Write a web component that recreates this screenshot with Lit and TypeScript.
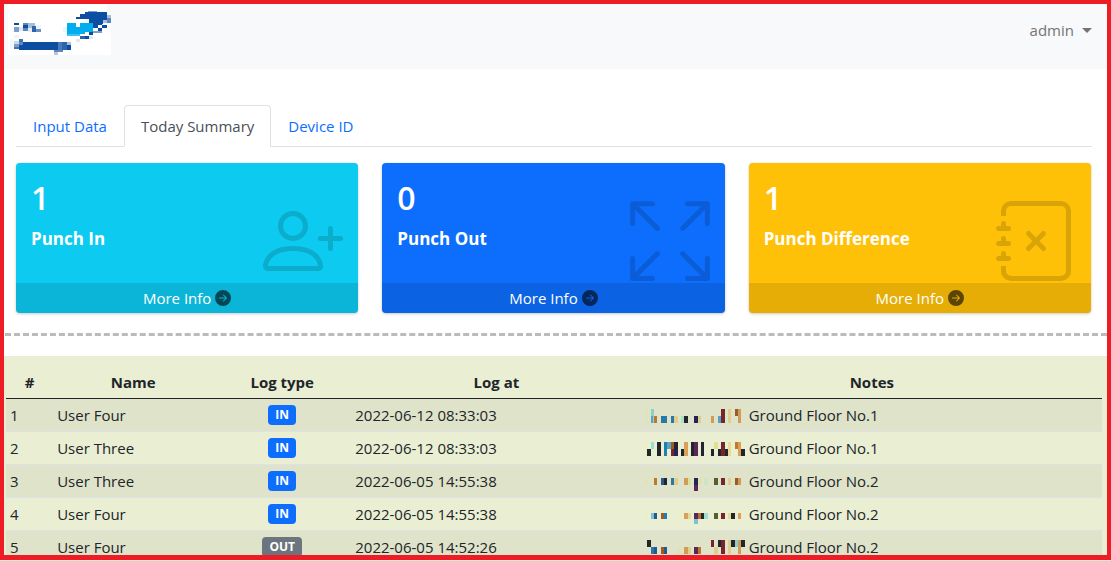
import { LitElement, html, css, svg } from "lit";
import { customElement, state } from "lit/decorators.js";

type Block = [number, number, number, number, string];

interface Card {
  count: number;
  title: string;
  tone: string;
  icon: string[];
}

interface LogEntry {
  name: string;
  type: "IN" | "OUT";
  at: string;
  place: string;
  mosaic: Block[];
}

const CARDS: Card[] = [
  {
    count: 1,
    title: "Punch In",
    tone: "info",
    icon: [
      "M6 8a3 3 0 1 0 0-6 3 3 0 0 0 0 6zm2-3a2 2 0 1 1-4 0 2 2 0 0 1 4 0zm4 8c0 1-1 1-1 1H1s-1 0-1-1 1-4 6-4 6 3 6 4zm-1-.004c-.001-.246-.154-.986-.832-1.664C9.516 10.68 8.289 10 6 10c-2.29 0-3.516.68-4.168 1.332-.678.678-.83 1.418-.832 1.664h10z",
      "M13.5 5a.5.5 0 0 1 .5.5V7h1.5a.5.5 0 0 1 0 1H14v1.5a.5.5 0 0 1-1 0V8h-1.5a.5.5 0 0 1 0-1H13V5.5a.5.5 0 0 1 .5-.5z",
    ],
  },
  {
    count: 0,
    title: "Punch Out",
    tone: "primary",
    icon: [
      "M5.828 10.172a.5.5 0 0 0-.707 0l-4.096 4.096V11.5a.5.5 0 0 0-1 0v3.975a.5.5 0 0 0 .5.5H4.5a.5.5 0 0 0 0-1H1.732l4.096-4.096a.5.5 0 0 0 0-.707zm4.344 0a.5.5 0 0 1 .707 0l4.096 4.096V11.5a.5.5 0 1 1 1 0v3.975a.5.5 0 0 1-.5.5H11.5a.5.5 0 0 1 0-1h2.768l-4.096-4.096a.5.5 0 0 1 0-.707zm0-4.344a.5.5 0 0 0 .707 0l4.096-4.096V4.5a.5.5 0 1 0 1 0V.525a.5.5 0 0 0-.5-.5H11.5a.5.5 0 0 0 0 1h2.768l-4.096 4.096a.5.5 0 0 0 0 .707zm-4.344 0a.5.5 0 0 1-.707 0L1.025 1.732V4.5a.5.5 0 0 1-1 0V.525a.5.5 0 0 1 .5-.5H4.5a.5.5 0 0 1 0 1H1.732l4.096 4.096a.5.5 0 0 1 0 .707z",
    ],
  },
  {
    count: 1,
    title: "Punch Difference",
    tone: "warning",
    icon: [
      "M6.146 6.146a.5.5 0 0 1 .708 0L8 7.293l1.146-1.147a.5.5 0 1 1 .708.708L8.707 8l1.147 1.146a.5.5 0 0 1-.708.708L8 8.707 6.854 9.854a.5.5 0 0 1-.708-.708L7.293 8 6.146 6.854a.5.5 0 0 1 0-.708z",
      "M3 0h10a2 2 0 0 1 2 2v12a2 2 0 0 1-2 2H3a2 2 0 0 1-2-2v-1h1v1a1 1 0 0 0 1 1h10a1 1 0 0 0 1-1V2a1 1 0 0 0-1-1H3a1 1 0 0 0-1 1v1H1V2a2 2 0 0 1 2-2z",
      "M1 5v-.5a.5.5 0 0 1 1 0V5h.5a.5.5 0 0 1 0 1h-2a.5.5 0 0 1 0-1H1zm0 3v-.5a.5.5 0 0 1 1 0V8h.5a.5.5 0 0 1 0 1h-2a.5.5 0 0 1 0-1H1zm0 3v-.5a.5.5 0 0 1 1 0v.5h.5a.5.5 0 0 1 0 1h-2a.5.5 0 0 1 0-1H1z",
    ],
  },
];

const ARROW =
  "M8 0a8 8 0 1 1 0 16A8 8 0 0 1 8 0zM4.5 7.5a.5.5 0 0 0 0 1h5.793l-2.147 2.146a.5.5 0 0 0 .708.708l3-3a.5.5 0 0 0 0-.708l-3-3a.5.5 0 1 0-.708.708L10.293 7.5H4.5z";

const LOGS: LogEntry[] = [
  {
    name: "User Four", type: "IN", at: "2022-06-12 08:33:03", place: "Ground Floor No.1",
    mosaic: [
      [0, 0, 3, 14, "#dfe3a0"], [7, 0, 3, 14, "#8fd0c4"], [7, 7, 2, 7, "#5aa3c8"], [10, 7, 3, 7, "#b97a2a"],
      [17, 7, 6, 7, "#2878a8"], [27, 7, 3, 7, "#2878a8"], [30, 7, 4, 7, "#dfcf8a"], [37, 7, 3, 7, "#aee0c4"],
      [40, 7, 4, 7, "#22262a"], [50, 7, 4, 7, "#252258"], [54, 7, 3, 7, "#dfcf8a"], [67, 7, 3, 7, "#d09c58"],
      [74, 7, 3, 7, "#5a9fc8"], [77, 0, 4, 14, "#76252c"], [84, 0, 3, 14, "#dfcf8a"], [91, 0, 3, 7, "#9c5a28"],
      [94, 0, 3, 14, "#d09c58"],
    ],
  },
  {
    name: "User Three", type: "IN", at: "2022-06-12 08:33:03", place: "Ground Floor No.1",
    mosaic: [
      [0, 0, 3, 14, "#eaf0a8"], [3, 7, 4, 7, "#22262a"], [7, 0, 3, 7, "#9edcd8"], [13, 0, 4, 14, "#22262a"],
      [20, 0, 3, 14, "#2080b0"], [23, 0, 4, 7, "#5aa3c8"], [27, 0, 3, 7, "#a05a28"], [27, 7, 3, 7, "#76252c"],
      [30, 0, 4, 7, "#22262a"], [30, 7, 4, 7, "#252258"], [37, 7, 3, 7, "#22262a"], [40, 0, 4, 14, "#d8a058"],
      [47, 0, 3, 14, "#22262a"], [50, 0, 4, 14, "#5a2858"], [57, 0, 3, 14, "#22262a"], [67, 7, 3, 7, "#22262a"],
      [70, 0, 4, 7, "#e8dc94"], [74, 7, 3, 7, "#22262a"], [77, 0, 4, 14, "#76252c"], [81, 7, 3, 7, "#22262a"],
      [84, 0, 3, 14, "#e8dc94"], [91, 0, 3, 7, "#c07a28"], [94, 0, 3, 14, "#d8a058"], [97, 7, 4, 7, "#22262a"],
    ],
  },
  {
    name: "User Three", type: "IN", at: "2022-06-05 14:55:38", place: "Ground Floor No.2",
    mosaic: [
      [0, 3, 3, 7, "#dfe3a0"], [10, 3, 3, 7, "#b97a2a"], [17, 3, 3, 7, "#285890"], [20, 3, 3, 7, "#22262a"],
      [27, 3, 3, 7, "#2878a8"], [30, 3, 4, 7, "#dfcf8a"], [40, 3, 4, 7, "#d09c58"], [44, 3, 3, 7, "#dfdf9c"],
      [50, 3, 4, 7, "#252258"], [50, 10, 4, 7, "#5a2858"], [54, 3, 3, 7, "#dfe3a0"], [60, 3, 4, 7, "#cce5c4"],
      [70, 3, 4, 7, "#58602a"], [77, 3, 4, 7, "#76252c"], [84, 3, 3, 7, "#dfcf8a"], [91, 3, 3, 7, "#9c5a28"],
      [94, 3, 3, 7, "#d09c58"],
    ],
  },
  {
    name: "User Four", type: "IN", at: "2022-06-05 14:55:38", place: "Ground Floor No.2",
    mosaic: [
      [0, 5, 3, 6, "#eaf0a8"], [7, 5, 3, 6, "#78c4d0"], [10, 5, 3, 6, "#285890"], [17, 5, 3, 6, "#a05a28"],
      [20, 5, 3, 6, "#2080b0"], [34, 5, 3, 6, "#eaf0c0"], [40, 5, 4, 6, "#d8a058"], [44, 5, 3, 6, "#e8dc94"],
      [50, 5, 4, 6, "#5a2858"], [50, 11, 4, 6, "#78c4d0"], [54, 5, 3, 6, "#b87028"], [57, 5, 3, 6, "#22262a"],
      [60, 5, 4, 6, "#9edcd8"], [70, 5, 4, 6, "#58602a"], [77, 5, 4, 6, "#76252c"], [84, 5, 3, 6, "#e8dc94"],
      [87, 5, 4, 6, "#22262a"], [94, 5, 3, 6, "#d8a058"],
    ],
  },
  {
    name: "User Four", type: "OUT", at: "2022-06-05 14:52:26", place: "Ground Floor No.2",
    mosaic: [
      [0, -1, 3, 7, "#dfe3a0"], [3, -1, 4, 7, "#22262a"], [7, 6, 3, 7, "#2878a8"], [10, 6, 3, 7, "#285890"],
      [17, 6, 3, 7, "#9c5a28"], [20, 6, 3, 7, "#285890"], [34, 6, 3, 7, "#dfe3b0"], [40, 6, 4, 7, "#d09c58"],
      [44, 6, 3, 7, "#dfcf8a"], [50, 6, 4, 7, "#5a2858"], [54, 6, 3, 7, "#b97a2a"], [67, -1, 3, 7, "#76252c"],
      [70, 6, 4, 7, "#dfcf8a"], [74, -1, 3, 7, "#22262a"], [77, -1, 4, 14, "#76252c"], [84, -1, 3, 14, "#dfcf8a"],
      [87, -1, 4, 7, "#22262a"], [91, -1, 3, 7, "#90ccc8"], [94, -1, 3, 14, "#d09c58"], [97, -1, 4, 7, "#22262a"],
    ],
  },
];

const LOGO: Block[] = [
  [6, 12, 5, 2, "#0b4ea2"], [6, 16, 5, 5, "#7f9ccb"], [11, 16, 4, 4, "#dce8f4"], [15, 12, 5, 8, "#5f86bf"],
  [15, 14, 5, 3, "#0b4ea2"], [20, 12, 4, 5, "#a8bedd"], [20, 17, 4, 4, "#e4ecf6"], [24, 12, 3, 8, "#a8bedd"],
  [24, 15, 4, 6, "#2c65ae"], [28, 14, 5, 4, "#edf4fa"], [28, 18, 5, 3, "#6f92c6"],
  [80, 0, 9, 1, "#7f9ccb"], [77, 1, 22, 10, "#0b4ea2"], [72, 3, 6, 3, "#0b4ea2"], [68, 6, 12, 2, "#0b4ea2"],
  [77, 8, 4, 3, "#eef4fa"], [81, 8, 5, 6, "#0b4ea2"], [86, 8, 9, 5, "#0b4ea2"], [95, 5, 4, 4, "#0b4ea2"],
  [99, 4, 4, 4, "#a8bedd"], [99, 7, 4, 5, "#5f86bf"], [95, 9, 4, 3, "#a8bedd"], [85, 12, 5, 5, "#0b4ea2"],
  [90, 12, 4, 2, "#0b4ea2"], [94, 14, 5, 3, "#0b4ea2"], [90, 17, 4, 3, "#0b4ea2"], [85, 20, 9, 2, "#7f9ccb"],
  [81, 21, 4, 3, "#0b4ea2"], [72, 25, 5, 3, "#2c65ae"], [77, 25, 4, 3, "#0b4ea2"], [81, 25, 4, 3, "#dce8f4"],
  [68, 28, 4, 3, "#dce8f4"], [55, 16, 4, 5, "#eaf7fd"], [59, 12, 9, 10, "#00aeef"], [72, 12, 13, 5, "#00aeef"],
  [68, 16, 17, 5, "#00aeef"], [59, 20, 18, 3, "#00aeef"], [59, 23, 13, 2, "#3fc1f3"],
  [6, 24, 5, 3, "#eef4fa"], [11, 28, 4, 3, "#3f73b5"], [2, 28, 4, 10, "#f4f8fc"], [6, 30, 5, 3, "#c9d7ea"],
  [6, 33, 5, 3, "#7f9ccb"], [6, 36, 5, 2, "#3f73b5"], [11, 31, 39, 8, "#0b4ea2"], [11, 31, 4, 3, "#5f86bf"],
  [50, 31, 4, 8, "#4a7ab8"], [54, 31, 5, 8, "#2c65ae"], [59, 31, 4, 3, "#a8bedd"], [59, 34, 4, 5, "#0b4ea2"],
  [46, 39, 9, 2, "#5f86bf"], [46, 41, 4, 3, "#b5c8e2"],
];

const blocks = (list: Block[]) =>
  list.map(([x, y, w, h, fill]) => svg`<rect x=${x} y=${y} width=${w} height=${h} fill=${fill}></rect>`);

const paths = (list: string[]) => list.map((d) => svg`<path d=${d}></path>`);

@customElement("app-root")
export class AppRoot extends LitElement {
  @state() private tab = "Today Summary";

  static styles = css`
    :host {
      display: block;
      height: 100vh;
      box-sizing: border-box;
      padding-bottom: 1px;
      background: #eaefd3;
      color: #212529;
      font: 15px/24px "Open Sans", "Noto Sans", sans-serif;
    }
    .frame {
      height: 100%;
      box-sizing: border-box;
      border: 4px solid #ee1c25;
      border-bottom-width: 5px;
      overflow: hidden;
      background: #fff;
    }
    .navbar {
      display: flex;
      justify-content: space-between;
      align-items: flex-start;
      height: 65px;
      padding: 0 15px 0 4px;
      background: #f8f9fa;
    }
    .logo { display: block; }
    .user {
      display: flex;
      align-items: center;
      gap: 8px;
      margin-top: 14px;
      padding: 0;
      border: 0;
      background: none;
      color: #737475;
      font: inherit;
    }
    .caret {
      border: 5px solid transparent;
      border-top-color: currentColor;
      border-bottom: 0;
    }
    .tabs {
      display: flex;
      margin: 36px 15px 0 12px;
      border-bottom: 1px solid #dee2e6;
    }
    .tab {
      margin-bottom: -1px;
      padding: 8px 16px;
      border: 1px solid transparent;
      border-radius: 4px 4px 0 0;
      background: none;
      color: #0d6efd;
      font: inherit;
    }
    .active {
      border-color: #dee2e6 #dee2e6 #fff;
      background: #fff;
      color: #495057;
    }
    .cards {
      display: grid;
      grid-template-columns: repeat(3, 1fr);
      gap: 24px;
      margin: 16px 16px 20px 12px;
    }
    .card {
      position: relative;
      border-radius: 4px;
      color: #fff;
      box-shadow: 0 0 1px rgba(0, 0, 0, 0.13), 0 1px 3px rgba(0, 0, 0, 0.2);
      overflow: hidden;
    }
    .info { background: #0dcaf0; }
    .primary { background: #0d6efd; }
    .warning { background: #ffc107; }
    .inner { padding: 16px 15px 32px; }
    .count {
      margin: 0;
      font-size: 32px;
      line-height: 38px;
      font-weight: 600;
    }
    .title {
      margin: 10px 0 0;
      font-size: 17px;
      line-height: 24px;
      font-weight: 700;
    }
    .glyph {
      position: absolute;
      top: 38px;
      right: 15px;
      fill: rgba(0, 0, 0, 0.15);
    }
    .more {
      display: flex;
      position: relative;
      justify-content: center;
      align-items: center;
      gap: 4px;
      height: 30px;
      background: rgba(0, 0, 0, 0.1);
      color: #fff;
      text-decoration: none;
    }
    .arrow { fill: rgba(0, 0, 0, 0.6); }
    .rule {
      margin: 0 0 20px 1px;
      border: 0;
      border-top: 3px dashed #bbb;
    }
    .log {
      padding: 10px 5px 0 2px;
      background: #eaefd3;
    }
    .table {
      width: 100%;
      table-layout: fixed;
      border-collapse: separate;
      border-spacing: 0;
    }
    .c1 { width: 4.3%; }
    .c2 { width: 14.6%; }
    .c3 { width: 12.6%; }
    .c4 { width: 26.5%; }
    th {
      padding: 4px;
      border-bottom: 1px solid #212529;
      font-weight: 700;
    }
    td {
      height: 24px;
      padding: 4px;
      border-bottom: 1px solid #dee2e6;
      white-space: nowrap;
    }
    tbody tr:nth-child(odd) td { background: #dfe3c9; }
    .mid { text-align: center; }
    .badge {
      display: block;
      width: fit-content;
      margin: 2px auto;
      padding: 4px 7px;
      border-radius: 4px;
      background: #0d6efd;
      color: #fff;
      font-size: 12px;
      line-height: 12px;
      font-weight: 700;
    }
    .out { background: #6c757d; }
    .note {
      display: flex;
      align-items: center;
      height: 24px;
    }
  `;

  render() {
    return html`
      <div class="frame">
        <header class="navbar">
          <svg class="logo" width="103" height="51" viewBox="0 -7 103 51" shape-rendering="crispEdges" role="img" aria-label="Logo">
            <rect x="0" y="-7" width="99" height="51" fill="#fff"></rect>
            <rect x="99" y="11" width="4" height="33" fill="#fff"></rect>
            ${blocks(LOGO)}
          </svg>
          <button class="user" type="button" aria-haspopup="true">admin<span class="caret"></span></button>
        </header>
        <nav class="tabs" role="tablist">
          ${["Input Data", "Today Summary", "Device ID"].map(
            (name) => html`<button
              class="tab ${this.tab === name ? "active" : ""}"
              type="button"
              role="tab"
              aria-selected=${this.tab === name}
              @click=${() => (this.tab = name)}
            >${name}</button>`
          )}
        </nav>
        <section class="cards">
          ${CARDS.map(
            (c) => html`<article class="card ${c.tone}">
              <div class="inner">
                <h3 class="count">${c.count}</h3>
                <p class="title">${c.title}</p>
              </div>
              <svg class="glyph" width="80" height="80" viewBox="0 0 16 16" aria-hidden="true">${paths(c.icon)}</svg>
              <a class="more" href="#">More Info
                <svg class="arrow" width="16" height="16" viewBox="0 0 16 16" aria-hidden="true">${paths([ARROW])}</svg>
              </a>
            </article>`
          )}
        </section>
        <hr class="rule" />
        <section class="log">
          <table class="table">
            <colgroup><col class="c1" /><col class="c2" /><col class="c3" /><col class="c4" /><col /></colgroup>
            <thead>
              <tr><th>#</th><th>Name</th><th>Log type</th><th>Log at</th><th>Notes</th></tr>
            </thead>
            <tbody>
              ${LOGS.map(
                (row, i) => html`<tr>
                  <td>${i + 1}</td>
                  <td>${row.name}</td>
                  <td class="mid"><span class="badge ${row.type === "OUT" ? "out" : ""}">${row.type}</span></td>
                  <td>${row.at}</td>
                  <td>
                    <div class="note">
                      <svg width="103" height="20" viewBox="2 -4 103 20" shape-rendering="crispEdges" aria-hidden="true">${blocks(row.mosaic)}</svg>
                      ${row.place}
                    </div>
                  </td>
                </tr>`
              )}
            </tbody>
          </table>
        </section>
      </div>
    `;
  }
}
